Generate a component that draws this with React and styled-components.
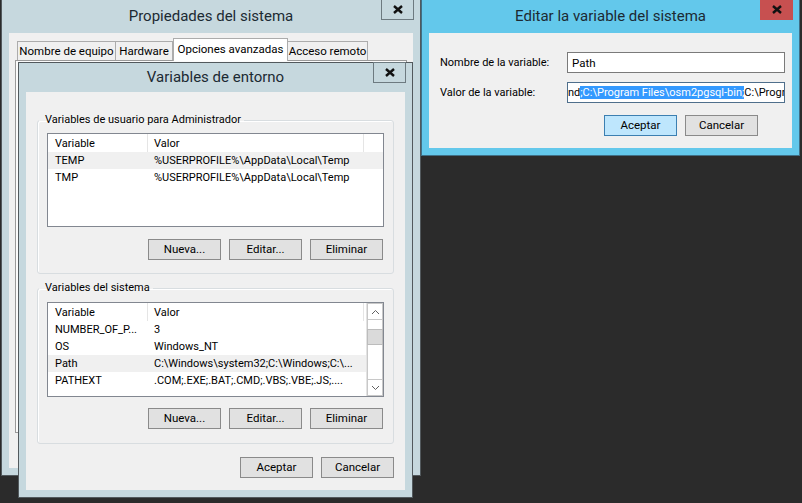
import React from 'react';
import styled, {createGlobalStyle} from 'styled-components';

const GlobalStyle = createGlobalStyle`
  html, body {
    margin: 0;
    padding: 0;
    background: #2b2b2b;
  }
  body {
    font-family: Roboto, "Liberation Sans", sans-serif;
    font-size: 11px;
    color: #000;
  }
`;

const Desktop = styled.div`
  position: relative;
  width: 802px;
  height: 503px;
  overflow: hidden;
  background: #2b2b2b;
`;

const Window = styled.div`
  position: absolute;
  left: ${p => p.$x}px;
  top: ${p => p.$y}px;
  width: ${p => p.$w}px;
  height: ${p => p.$h}px;
  box-sizing: border-box;
  border: 1px solid ${p => (p.$active ? '#3f6f86' : '#52595d')};
  background: ${p => (p.$active ? '#63c8eb' : '#c6d8de')};
  padding: 0 7px 7px;
  display: flex;
  flex-direction: column;
`;

const TitleBar = styled.div`
  height: ${p => p.$h}px;
  flex: none;
  display: flex;
  align-items: center;
  justify-content: center;
  padding-bottom: 1px;
  box-sizing: border-box;
  font-size: 15px;
  color: #1c2a33;
`;

const CloseBtn = styled.div`
  position: absolute;
  top: -1px;
  right: 6px;
  width: 33px;
  height: 21px;
  box-sizing: border-box;
  display: flex;
  align-items: center;
  justify-content: center;
  border: 1px solid ${p => (p.$active ? '#c75050' : '#6d7a80')};
  background: ${p => (p.$active ? '#c75050' : 'transparent')};
`;

const Client = styled.div`
  flex: 1;
  min-height: 0;
  background: #f0f0f0;
  display: flex;
  flex-direction: column;
  padding: ${p => p.$pad || '0'};
`;

const TabStrip = styled.div`
  display: flex;
  align-items: flex-end;
  height: 22px;
  margin-top: 5px;
  padding-left: 8px;
  position: relative;
  z-index: 1;
`;

const Tab = styled.div`
  width: ${p => p.$w}px;
  height: ${p => (p.$selected ? 23 : 19)}px;
  margin-bottom: ${p => (p.$selected ? -1 : 0)}px;
  box-sizing: border-box;
  border: 1px solid #acacac;
  border-bottom: none;
  border-left-width: ${p => (p.$first || p.$selected ? 1 : 0)}px;
  background: ${p => (p.$selected ? '#fff' : '#f0f0f0')};
  display: flex;
  align-items: center;
  justify-content: center;
  padding-bottom: ${p => (p.$selected ? 3 : 0)}px;
  font-size: 11.5px;
  white-space: nowrap;
`;

const TabPanel = styled.div`
  height: 373px;
  margin: 0 6px;
  box-sizing: border-box;
  border: 1px solid #9a9a9a;
  background: #fbfbfb;
`;

const Group = styled.fieldset`
  margin: ${p => p.$mt}px 0 0;
  padding: ${p => p.$pt}px 9px ${p => p.$pb}px;
  border: 1px solid #d8dde0;
  border-radius: 3px;
  box-shadow: inset 1px 1px 0 #fff;
  min-width: 0;
`;

const Legend = styled.legend`
  margin-left: -8px;
  padding: 0 3px 0 6px;
  line-height: 14px;
  height: 14px;
  font-size: 11px;
`;

const ListBox = styled.div`
  height: ${p => p.$h}px;
  box-sizing: border-box;
  border: 1px solid #828790;
  background: #fff;
  display: flex;
  overflow: hidden;
`;

const ListBody = styled.div`
  flex: 1;
  display: flex;
  flex-direction: column;
  overflow: hidden;
`;

const Row = styled.div`
  display: grid;
  grid-template-columns: 100px 216px;
  height: ${p => (p.$header ? 18 : 17)}px;
  background: ${p => (p.$selected ? '#f0f0f0' : '#fff')};
  flex: none;
`;

const Cell = styled.div`
  box-sizing: border-box;
  display: flex;
  align-items: center;
  padding-left: ${p => (p.$second ? 6 : 7)}px;
  white-space: nowrap;
  overflow: hidden;
  border-right: ${p => (p.$header ? '1px solid #e5e5e5' : 'none')};
`;

const ScrollBar = styled.div`
  width: 17px;
  flex: none;
  display: flex;
  flex-direction: column;
  box-sizing: border-box;
  border-left: 1px solid #e3e3e3;
  background: #fff;
`;

const ScrollArrow = styled.div`
  height: 17px;
  flex: none;
  box-sizing: border-box;
  border: 1px solid #c8c8c8;
  display: flex;
  align-items: center;
  justify-content: center;
`;

const ScrollTrack = styled.div`
  flex: 1;
  border-left: 1px solid #c8c8c8;
  border-right: 1px solid #c8c8c8;
`;

const Thumb = styled.div`
  height: 16px;
  margin-top: ${p => p.$offset}px;
  box-sizing: border-box;
  border: 1px solid #bcbcbc;
  background: #dadada;
  margin-left: -1px;
  margin-right: -1px;
`;

const ButtonRow = styled.div`
  display: flex;
  justify-content: flex-end;
  gap: 8px;
  margin-top: ${p => p.$mt}px;
  padding-right: ${p => p.$pr || 0}px;
`;

const Button = styled.div`
  width: 73px;
  height: 21px;
  box-sizing: border-box;
  border: 1px solid ${p => (p.$default ? '#3c7fb1' : '#8a8a8a')};
  background: ${p => (p.$default ? '#bee6fd' : '#e1e1e1')};
  display: flex;
  align-items: center;
  justify-content: center;
  padding-bottom: 1px;
  font-size: 11.5px;
`;

const FormGrid = styled.div`
  display: grid;
  grid-template-columns: 127px 1fr;
  row-gap: 9px;
  align-items: center;
`;

const Label = styled.div`
  white-space: nowrap;
`;

const TextBox = styled.div`
  height: 21px;
  box-sizing: border-box;
  border: 1px solid ${p => (p.$focused ? '#4f6f8c' : '#7a7a7a')};
  background: #fff;
  display: flex;
  align-items: center;
  padding-left: 4px;
  white-space: nowrap;
  overflow: hidden;
  font-size: 11.5px;
`;

const Scrolled = styled.span`
  margin-left: ${p => p.$shift}px;
  font-size: 11px;
`;

const Selection = styled.span`
  background: #3399ff;
  color: #fff;
`;

const CloseGlyph = () => (
  <svg width="10" height="9" viewBox="0 0 10 9">
    <path d="M1 1 L9 8 M9 1 L1 8" stroke="#111" strokeWidth="2.4" fill="none" />
  </svg>
);

const Chevron = ({up}) => (
  <svg width="9" height="6" viewBox="0 0 9 6">
    <path d={up ? 'M1 5 L4.5 1.5 L8 5' : 'M1 1 L4.5 4.5 L8 1'} stroke="#606060" strokeWidth="1" fill="none" />
  </svg>
);

const tabs = [
  {label: 'Nombre de equipo', w: 99},
  {label: 'Hardware', w: 57},
  {label: 'Opciones avanzadas', w: 115, selected: true},
  {label: 'Acceso remoto', w: 80},
];

const userVars = [
  {name: 'TEMP', value: '%USERPROFILE%\\AppData\\Local\\Temp', selected: true},
  {name: 'TMP', value: '%USERPROFILE%\\AppData\\Local\\Temp'},
];

const systemVars = [
  {name: 'NUMBER_OF_P...', value: '3'},
  {name: 'OS', value: 'Windows_NT'},
  {name: 'Path', value: 'C:\\Windows\\system32;C:\\Windows;C:\\...', selected: true},
  {name: 'PATHEXT', value: '.COM;.EXE;.BAT;.CMD;.VBS;.VBE;.JS;....'},
];

const VarList = ({height, rows, scroll}) => (
  <ListBox $h={height}>
    <ListBody>
      <Row $header>
        <Cell $header>Variable</Cell>
        <Cell $header $second>Valor</Cell>
      </Row>
      {rows.map(r => (
        <Row key={r.name} $selected={r.selected}>
          <Cell>{r.name}</Cell>
          <Cell $second>{r.value}</Cell>
        </Row>
      ))}
    </ListBody>
    {scroll && (
      <ScrollBar>
        <ScrollArrow><Chevron up /></ScrollArrow>
        <ScrollTrack><Thumb $offset={9} /></ScrollTrack>
        <ScrollArrow><Chevron /></ScrollArrow>
      </ScrollBar>
    )}
  </ListBox>
);

const EditButtons = ({mt}) => (
  <ButtonRow $mt={mt} $pr={1}>
    <Button>Nueva...</Button>
    <Button>Editar...</Button>
    <Button>Eliminar</Button>
  </ButtonRow>
);

export default function App () {
  return (
    <Desktop>
      <GlobalStyle />

      <Window $x={1} $y={-1} $w={420} $h={477}>
        <TitleBar $h={33}>Propiedades del sistema</TitleBar>
        <CloseBtn><CloseGlyph /></CloseBtn>
        <Client>
          <TabStrip>
            {tabs.map((t, i) => (
              <Tab key={t.label} $w={t.w} $selected={t.selected} $first={i === 0}>{t.label}</Tab>
            ))}
          </TabStrip>
          <TabPanel />
        </Client>
      </Window>

      <Window $x={18} $y={62} $w={395} $h={436}>
        <TitleBar $h={29}>Variables de entorno</TitleBar>
        <CloseBtn><CloseGlyph /></CloseBtn>
        <Client $pad="21px 11px 0">
          <Group $mt={0} $pt={6} $pb={13}>
            <Legend>Variables de usuario para Administrador</Legend>
            <VarList height={94} rows={userVars} />
            <EditButtons mt={12} />
          </Group>
          <Group $mt={7} $pt={7} $pb={14}>
            <Legend>Variables del sistema</Legend>
            <VarList height={95} rows={systemVars} scroll />
            <EditButtons mt={11} />
          </Group>
          <ButtonRow $mt={13}>
            <Button>Aceptar</Button>
            <Button>Cancelar</Button>
          </ButtonRow>
        </Client>
      </Window>

      <Window $x={421} $y={-1} $w={379} $h={157} $active>
        <TitleBar $h={33}>Editar la variable del sistema</TitleBar>
        <CloseBtn $active><CloseGlyph /></CloseBtn>
        <Client $pad="19px 7px 0 11px">
          <FormGrid>
            <Label>Nombre de la variable:</Label>
            <TextBox>Path</TextBox>
            <Label>Valor de la variable:</Label>
            <TextBox $focused>
              <Scrolled $shift={-4}>
                nd<Selection>;C:\Program Files\osm2pgsql-bin;</Selection>C:\Progr
              </Scrolled>
            </TextBox>
          </FormGrid>
          <ButtonRow $mt={12} $pr={27}>
            <Button $default>Aceptar</Button>
            <Button>Cancelar</Button>
          </ButtonRow>
        </Client>
      </Window>
    </Desktop>
  );
}
